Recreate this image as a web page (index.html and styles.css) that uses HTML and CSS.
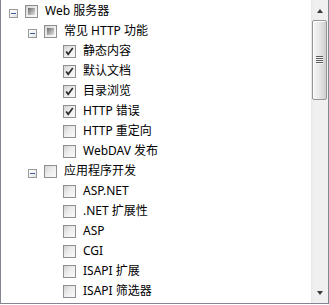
FILE: index.html
```html
<!DOCTYPE html>
<html lang="zh-CN">
<head>
<meta charset="utf-8">
<title>Web 服务器</title>
<link rel="stylesheet" href="styles.css">
</head>
<body>
<div class="frame">
  <div class="tree">
    <div class="row lvl0"><span class="exp"><span class="box"></span></span><span class="cb mixed"></span><span class="label">Web 服务器</span></div>
    <div class="row lvl1"><span class="exp"><span class="box"></span></span><span class="cb mixed"></span><span class="label">常见 HTTP 功能</span></div>
    <div class="row lvl2"><span class="exp"></span><span class="cb checked"><svg viewBox="0 0 11 11" width="11" height="11"><path d="M2.2 5.4 L4.2 8.3 L8.8 2" fill="none" stroke="#2b2b2b" stroke-width="1.7"/></svg></span><span class="label">静态内容</span></div>
    <div class="row lvl2"><span class="exp"></span><span class="cb checked"><svg viewBox="0 0 11 11" width="11" height="11"><path d="M2.2 5.4 L4.2 8.3 L8.8 2" fill="none" stroke="#2b2b2b" stroke-width="1.7"/></svg></span><span class="label">默认文档</span></div>
    <div class="row lvl2"><span class="exp"></span><span class="cb checked"><svg viewBox="0 0 11 11" width="11" height="11"><path d="M2.2 5.4 L4.2 8.3 L8.8 2" fill="none" stroke="#2b2b2b" stroke-width="1.7"/></svg></span><span class="label">目录浏览</span></div>
    <div class="row lvl2"><span class="exp"></span><span class="cb checked"><svg viewBox="0 0 11 11" width="11" height="11"><path d="M2.2 5.4 L4.2 8.3 L8.8 2" fill="none" stroke="#2b2b2b" stroke-width="1.7"/></svg></span><span class="label">HTTP 错误</span></div>
    <div class="row lvl2"><span class="exp"></span><span class="cb"></span><span class="label">HTTP 重定向</span></div>
    <div class="row lvl2"><span class="exp"></span><span class="cb"></span><span class="label">WebDAV 发布</span></div>
    <div class="row lvl1"><span class="exp"><span class="box"></span></span><span class="cb"></span><span class="label">应用程序开发</span></div>
    <div class="row lvl2"><span class="exp"></span><span class="cb"></span><span class="label">ASP.NET</span></div>
    <div class="row lvl2"><span class="exp"></span><span class="cb"></span><span class="label">.NET 扩展性</span></div>
    <div class="row lvl2"><span class="exp"></span><span class="cb"></span><span class="label">ASP</span></div>
    <div class="row lvl2"><span class="exp"></span><span class="cb"></span><span class="label">CGI</span></div>
    <div class="row lvl2"><span class="exp"></span><span class="cb"></span><span class="label">ISAPI 扩展</span></div>
    <div class="row lvl2"><span class="exp"></span><span class="cb"></span><span class="label">ISAPI 筛选器</span></div>
  </div>
  <div class="vscroll">
    <div class="sbtn"><span class="arrow up"></span></div>
    <div class="track">
      <div class="thumb"><span class="grip"></span></div>
    </div>
    <div class="sbtn"><span class="arrow down"></span></div>
  </div>
</div>
</body>
</html>
```
FILE: styles.css
```css
html, body {
  margin: 0;
  padding: 0;
  background: #ffffff;
}

.frame {
  box-sizing: border-box;
  width: 329px;
  height: 304px;
  border: 1px solid #828790;
  border-top: none;
  display: flex;
  background: #ffffff;
  overflow: hidden;
}

.tree {
  flex: 1;
  padding-top: 1px;
  overflow: hidden;
  font-family: "Noto Sans", "Noto Sans CJK SC", sans-serif;
  font-size: 12px;
  color: #000000;
}

.row {
  display: flex;
  align-items: flex-start;
  height: 20px;
  white-space: nowrap;
}

.lvl0 { padding-left: 8px; }
.lvl1 { padding-left: 27px; }
.lvl2 { padding-left: 46px; }

.exp {
  width: 16px;
  flex: none;
}

.box {
  display: block;
  box-sizing: border-box;
  width: 9px;
  height: 9px;
  margin-top: 8px;
  border: 1px solid #9a9a9a;
  background: linear-gradient(135deg, #ffffff 0%, #f2f2f2 60%, #dcdcdc 100%);
  position: relative;
}

.box::after {
  content: "";
  position: absolute;
  left: 1px;
  top: 3px;
  width: 5px;
  height: 1px;
  background: #3d5a99;
}

.cb {
  box-sizing: border-box;
  flex: none;
  width: 13px;
  height: 13px;
  margin-top: 4px;
  margin-right: 7px;
  border: 1px solid #8e8f8f;
  background: linear-gradient(135deg, #d2d2d2 0%, #ececec 45%, #fafafa 100%);
  display: flex;
  align-items: center;
  justify-content: center;
}

.cb svg {
  display: block;
}

.mixed::after {
  content: "";
  width: 7px;
  height: 7px;
  background: linear-gradient(135deg, #6a6a6a 0%, #a8a8a8 50%, #e2e2e2 100%);
}

.label {
  line-height: 20px;
}

.vscroll {
  width: 17px;
  flex: none;
  display: flex;
  flex-direction: column;
  background: linear-gradient(to right, #e6e6e6 0, #efefef 2px, #f0f0f0 100%);
}

.sbtn {
  height: 17px;
  flex: none;
  display: flex;
  align-items: center;
  justify-content: center;
}

.arrow {
  width: 0;
  height: 0;
  border-left: 3.5px solid transparent;
  border-right: 3.5px solid transparent;
}

.arrow.up {
  border-bottom: 4px solid #3a3a3a;
  margin-top: 4px;
}

.arrow.down {
  border-top: 4px solid #3a3a3a;
  margin-top: -4px;
}

.track {
  flex: 1;
  padding-top: 3px;
}

.thumb {
  box-sizing: border-box;
  width: 15px;
  height: 80px;
  margin-left: 1px;
  border: 1px solid #959595;
  border-radius: 2px;
  background: linear-gradient(to right, #f4f4f4 0%, #ececec 40%, #dcdcdc 70%, #cfcfcf 100%);
  box-shadow: inset 1px 1px 0 #ffffff;
  display: flex;
  align-items: center;
  justify-content: center;
}

.grip {
  width: 7px;
  height: 8px;
  background: repeating-linear-gradient(to bottom, #5c5c5c 0, #5c5c5c 1px, #f4f4f4 1px, #f4f4f4 2px);
}
```
